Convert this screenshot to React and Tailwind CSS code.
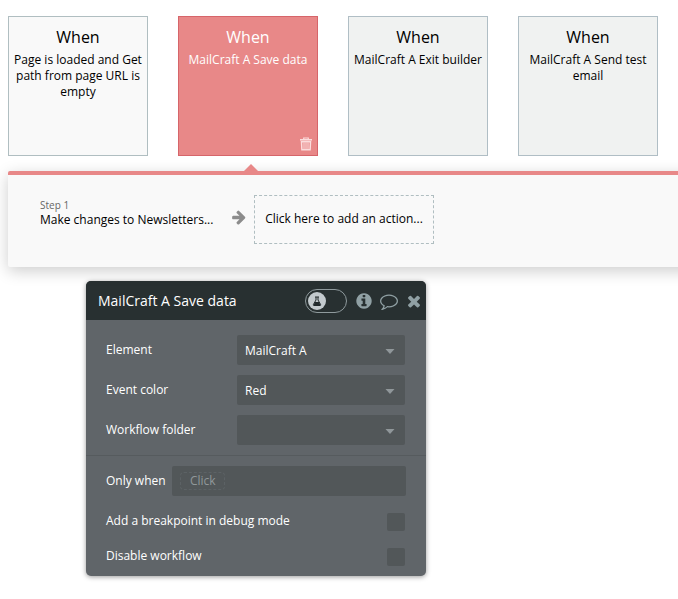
import React from "react";

const events = [
  { text: "Page is loaded and Get path from page URL is empty", tone: "border-[#b0bec1] bg-[#f9f9f9] text-black" },
  { text: "MailCraft A Save data", tone: "border-[#d6656a] bg-[#e88888] text-white", selected: true },
  { text: "MailCraft A Exit builder", tone: "border-[#b0bec5] bg-[#f0f2f1] text-black" },
  { text: "MailCraft A Send test email", tone: "border-[#b0bec5] bg-[#f0f2f1] text-black" },
];

function Glyph({ d, className }) {
  return (
    <svg viewBox="0 0 1792 1792" fill="currentColor" className={className} aria-hidden="true">
      <path d={d} />
    </svg>
  );
}

const ARROW =
  "M1600 960q0 54-37 91l-651 651q-39 37-91 37-51 0-90-37l-75-75q-38-38-38-91t38-91l293-293h-704q-52 0-84.500-37.500t-32.500-90.500v-128q0-53 32.500-90.500t84.500-37.500h704l-293-294q-38-36-38-90t38-90l75-75q38-38 90-38 53 0 91 38l651 651q37 35 37 90z";
const INFO =
  "M1152 1376v-160q0-14-9-23t-23-9h-96v-512q0-14-9-23t-23-9h-320q-14 0-23 9t-9 23v160q0 14 9 23t23 9h96v320h-96q-14 0-23 9t-9 23v160q0 14 9 23t23 9h448q14 0 23-9t9-23zm-128-896v-160q0-14-9-23t-23-9h-192q-14 0-23 9t-9 23v160q0 14 9 23t23 9h192q14 0 23-9t9-23zm640 416q0 209-103 385.500t-279.500 279.500-385.500 103-385.500-103-279.500-279.500-103-385.500 103-385.500 279.500-279.500 385.500-103 385.500 103 279.500 279.500 103 385.500z";
const COMMENT =
  "M896 384q-204 0-381.500 69.500t-282 187.500-104.500 255q0 112 71.500 213.500t201.500 175.500l87 50-27 96q-24 91-70 172 152-63 275-171l43-38 57 6q69 8 130 8 204 0 381.500-69.500t282-187.500 104.500-255-104.500-255-282-187.500-381.500-69.500zm896 512q0 174-120 321.500t-326 233-450 85.500q-70 0-145-8-198 175-460 242-49 14-114 22h-5q-15 0-27-10.500t-16-27.500v-1q-3-4-.5-12t2-10 4.500-9.500l6-9 7-8.500 8-9q7-8 31-34.500t34.500-38 31-39.500 32.500-51 27-59 26-76q-157-89-247.500-220t-90.500-281q0-174 120-321.500t326-233 450-85.500 450 85.500 326 233 120 321.500z";
const TIMES =
  "M1490 1322q0 40-28 68l-136 136q-28 28-68 28t-68-28l-294-294-294 294q-28 28-68 28t-68-28l-136-136q-28-28-28-68t28-68l294-294-294-294q-28-28-28-68t28-68l136-136q28-28 68-28t68 28l294 294 294-294q28-28 68-28t68 28l136 136q28 28 28 68t-28 68l-294 294 294 294q28 28 28 68z";

function TrashIcon() {
  return (
    <svg viewBox="0 0 14 14" className="size-[14px]" fill="none" stroke="currentColor" aria-hidden="true">
      <path d="M1 2.800h12" strokeWidth="1.600" />
      <path d="M4.700 2.500V1h4.600v1.500" strokeWidth="1.200" />
      <path d="M2.500 4.800h9l-.4 7.900H2.900z" strokeWidth="1.500" />
      <path d="M5 5.500v6.500M7 5.500v6.500M9 5.500v6.500" strokeWidth="1" />
    </svg>
  );
}

function EventCard({ text, tone, selected }) {
  return (
    <article className={"relative size-[140px] shrink-0 border px-1 pt-2 text-center " + tone}>
      <h2 className="text-base leading-6">When</h2>
      <p className="mt-[3px] text-xs leading-4">{text}</p>
      {selected && (
        <button type="button" aria-label="Delete event" className="absolute right-1 bottom-1 text-[#fbdcdc]">
          <TrashIcon />
        </button>
      )}
    </article>
  );
}

function SelectRow({ id, label, value }) {
  return (
    <div className="flex items-center justify-between">
      <label htmlFor={id}>{label}</label>
      <div className="grid w-[168px] items-center">
        <select
          id={id}
          defaultValue={value}
          className="col-start-1 row-start-1 h-[30px] w-full appearance-none rounded-xs bg-[#525759] px-2 pt-[2px] text-white"
        >
          <option value={value}>{value}</option>
        </select>
        <svg viewBox="0 0 10 5" className="pointer-events-none col-start-1 row-start-1 mt-[2px] mr-[10px] h-[5px] w-[10px] justify-self-end" aria-hidden="true">
          <path d="M0.500 0h9L5 5z" fill="#90979a" />
        </svg>
      </div>
    </div>
  );
}

function CheckRow({ id, label }) {
  return (
    <div className="flex h-[35px] items-center justify-between">
      <label htmlFor={id}>{label}</label>
      <input id={id} type="checkbox" className="mt-[2px] size-[18px] appearance-none rounded-xs bg-[#525759] checked:bg-[#90979a]" />
    </div>
  );
}

function PropertyEditor() {
  return (
    <section className="mt-[14px] ml-[78px] w-[340px] overflow-hidden rounded-[5px] bg-[#606569] text-xs leading-[18px] text-white shadow-[0_1px_5px_rgba(0,0,0,0.4)]">
      <header className="flex h-[39px] items-center bg-[#283031] pr-[3px] pl-3">
        <h1 className="flex-1 text-sm">MailCraft A Save data</h1>
        <button
          type="button"
          role="switch"
          aria-checked="false"
          aria-label="Experimental mode"
          className="mr-2 flex h-6 w-[42px] items-center rounded-full border border-[#8f9a9d] pl-[2px]"
        >
          <span className="grid size-[18px] place-items-center rounded-full bg-[#c3cace]">
            <svg viewBox="0 0 10 10" className="size-[10px]" aria-hidden="true">
              <path d="M3 1h4M4 1v3L1.400 8.500q-.3 1 .6 1h6q.9 0 .6-1L6 4V1" fill="none" stroke="#222a2d" strokeWidth="1" />
              <path d="M3 6h4l1.600 3.300H1.400z" fill="#222a2d" />
            </svg>
          </span>
        </button>
        <button type="button" aria-label="Information" className="mr-[7px] text-[#90a0a4]">
          <Glyph d={INFO} className="size-[18px]" />
        </button>
        <button type="button" aria-label="Comment" className="mr-[7px] text-[#90a0a4]">
          <Glyph d={COMMENT} className="size-[18px]" />
        </button>
        <button type="button" aria-label="Close" className="text-[#90a0a4]">
          <Glyph d={TIMES} className="size-[18px]" />
        </button>
      </header>
      <div className="flex flex-col gap-[10px] border-b border-[#565b5e] pt-[15px] pr-[21px] pb-[10px] pl-5">
        <SelectRow id="element" label="Element" value="MailCraft A" />
        <SelectRow id="event-color" label="Event color" value="Red" />
        <SelectRow id="folder" label="Workflow folder" value="" />
      </div>
      <div className="flex items-center pt-[10px] pr-5 pb-[7px] pl-5">
        <label htmlFor="condition" className="w-[66px]">Only when</label>
        <div className="flex h-[30px] flex-1 items-center rounded-xs bg-[#525759] px-2">
          <input
            id="condition"
            type="text"
            placeholder="Click"
            className="h-[18px] w-[45px] rounded-sm border border-dashed border-[#5c6265] pl-[9px] placeholder:text-[#90979a]"
          />
        </div>
      </div>
      <div className="pr-[21px] pb-[3px] pl-5">
        <CheckRow id="breakpoint" label="Add a breakpoint in debug mode" />
        <CheckRow id="disable" label="Disable workflow" />
      </div>
    </section>
  );
}

export default function App() {
  return (
    <main className="min-h-screen overflow-hidden bg-white pb-5 pl-2 font-['Open_Sans','Noto_Sans',sans-serif]">
      <div className="flex gap-[30px] pt-4">
        {events.map((e) => (
          <EventCard key={e.text} {...e} />
        ))}
      </div>
      <section className="relative mt-[15px] -mr-5 flex h-24 items-start rounded-l-xs border-t-4 border-[#e88888] bg-[#f9f9f9] pt-5 pl-8 shadow-[0_4px_16px_rgba(0,0,0,0.2)]">
        <svg viewBox="0 0 14 7" className="absolute -top-[11px] left-[236px] h-[7px] w-[14px]" aria-hidden="true">
          <path d="M0 7L7 0l7 7z" fill="#e88888" />
        </svg>
        <div className="w-[191px] pt-[3px]">
          <p className="text-[10px] leading-[14px] text-[#666]">Step 1</p>
          <p className="text-xs leading-4 text-black">Make changes to Newsletters...</p>
        </div>
        <Glyph d={ARROW} className="mt-[14px] mr-[7px] size-4 text-[#8c8c8c]" />
        <button type="button" className="h-[49px] w-[180px] border border-dashed border-[#b0bec1] pb-[2px] text-xs leading-4 text-black">
          Click here to add an action...
        </button>
      </section>
      <PropertyEditor />
    </main>
  );
}
